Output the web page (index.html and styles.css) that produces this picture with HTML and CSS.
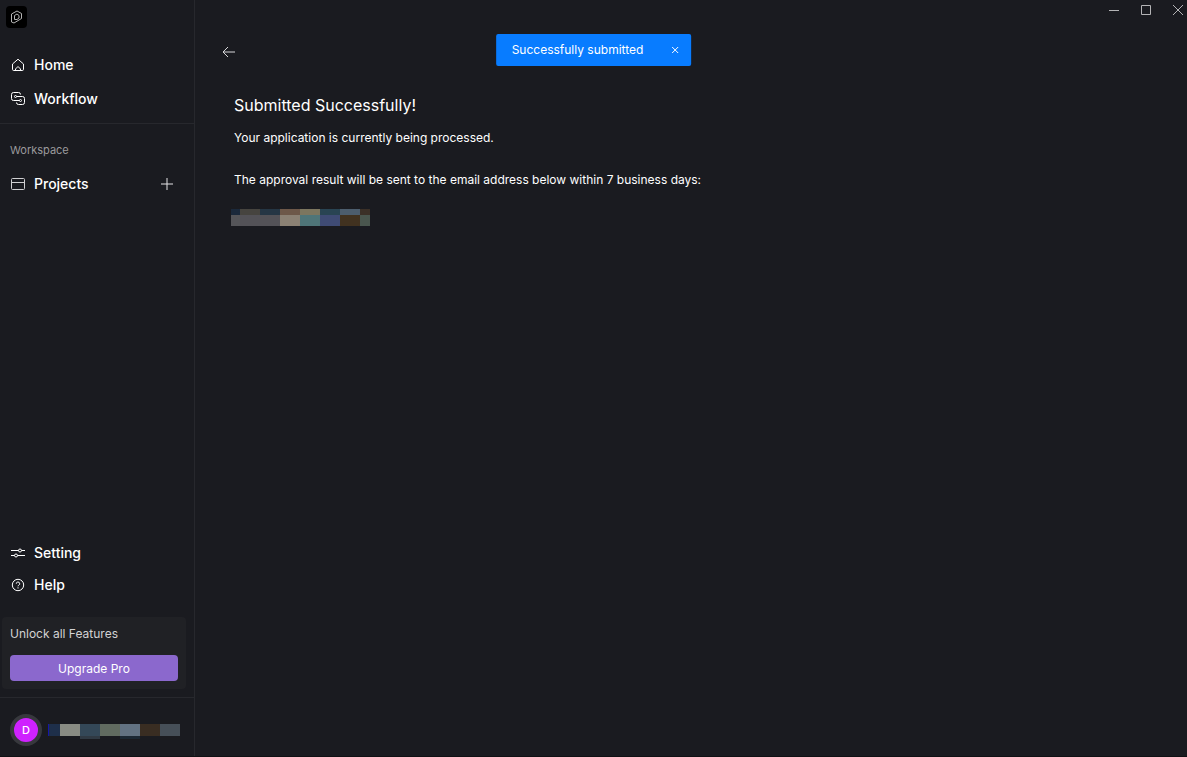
FILE: index.html
```html
<!DOCTYPE html>
<html lang="en">
<head>
  <meta charset="UTF-8">
  <meta name="viewport" content="width=device-width, initial-scale=1.0">
  <title>Submitted Successfully</title>
  <link rel="stylesheet" href="styles.css">
</head>
<body>
  <div class="app">
    <aside class="sidebar">
      <a class="logo" href="#" aria-label="Start page">
        <svg width="21" height="22" viewBox="0 0 21 22">
          <path d="M5.500 8 11 5l4.500 2.500v5L8 17l-2.500-1z"/>
          <path d="M8.500 13.500v-4L11 8l2 1.500v2.500l-2 1.500z"/>
        </svg>
      </a>

      <nav class="menu menu-main">
        <a class="menu-item" href="#">
          <svg class="icon" viewBox="0 0 16 16">
            <path d="M2.500 7 8 2.200 13.500 7v5.300a1.200 1.200 0 0 1-1.200 1.200H3.700a1.200 1.200 0 0 1-1.200-1.200z"/>
            <path d="M5.500 13.500v-1.500L8 9.500l2.500 2.500v1.500"/>
          </svg>
          <span>Home</span>
        </a>
        <a class="menu-item" href="#">
          <svg class="icon" viewBox="0 0 16 16">
            <path d="M6.500 5.500h6a2 2 0 0 1 2 2v4a2 2 0 0 1-2 2h-4a2 2 0 0 1-2-2"/>
            <path d="M9.500 9.500h-6a2 2 0 0 1-2-2v-4a2 2 0 0 1 2-2h5a2 2 0 0 1 2 2"/>
            <circle cx="5.500" cy="5.500" r="1"/>
            <circle cx="10.500" cy="9.500" r="1"/>
          </svg>
          <span>Workflow</span>
        </a>
      </nav>

      <div class="workspace">
        <h2 class="workspace-title">Workspace</h2>
        <div class="workspace-row">
          <a class="menu-item" href="#">
            <svg class="icon icon-soft" viewBox="0 0 16 16">
              <rect x="1.500" y="2.500" width="13" height="11" rx="1"/>
              <path d="M1.500 6.500h13"/>
            </svg>
            <span>Projects</span>
          </a>
          <button class="add-btn" type="button" aria-label="Add project">
            <svg width="14" height="14" viewBox="0 0 14 14"><path d="M7 1v12M1 7h12"/></svg>
          </button>
        </div>
      </div>

      <nav class="menu menu-bottom">
        <a class="menu-item" href="#">
          <svg class="icon" viewBox="0 0 16 16">
            <path d="M1 5.500h7.500M11.500 5.500H15M1 10.500h3.500M7.500 10.500H15"/>
            <circle cx="10" cy="5.500" r="1.500"/>
            <circle cx="6" cy="10.500" r="1.500"/>
          </svg>
          <span>Setting</span>
        </a>
        <a class="menu-item" href="#">
          <svg class="icon" viewBox="0 0 16 16">
            <circle cx="8" cy="8" r="5.700"/>
            <path d="M6.300 6.700a1.700 1.700 0 1 1 2.500 1.500c-.6.300-.8.600-.8 1.100M8 10.300v1.200"/>
          </svg>
          <span>Help</span>
        </a>
      </nav>

      <div class="upgrade">
        <p>Unlock all Features</p>
        <button class="upgrade-btn" type="button">Upgrade Pro</button>
      </div>

      <div class="user">
        <span class="avatar">D</span>
        <span class="mask mask-user">
          <i class="u1"></i><i class="u2"></i><i class="u3"></i><i class="u4"></i>
          <i class="u5"></i><i class="u6"></i><i class="u7"></i><i class="u8"></i>
        </span>
      </div>
    </aside>

    <main class="main">
      <button class="back-btn" type="button" aria-label="Back">
        <svg width="14" height="14" viewBox="0 0 14 14"><path d="M13 7H1.500M6 2 1 7l5 5"/></svg>
      </button>
      <section class="content">
        <h1>Submitted Successfully!</h1>
        <p>Your application is currently being processed.</p>
        <p class="result">The approval result will be sent to the email address below within 7 business days:</p>
      </section>
      <div class="mask mask-email">
        <i class="e1"></i><i class="e2"></i><i class="e3"></i><i class="e4"></i>
        <i class="e5"></i><i class="e6"></i><i class="e7"></i><i class="e8"></i>
      </div>
    </main>
  </div>

  <div class="window-controls">
    <button type="button" aria-label="Minimize"><svg width="12" height="12" viewBox="0 0 12 12"><path d="M1 6.500h10"/></svg></button>
    <button type="button" aria-label="Maximize"><svg width="12" height="12" viewBox="0 0 12 12"><path d="M1.500 1.500h9v9h-9z"/></svg></button>
    <button type="button" aria-label="Close"><svg width="12" height="12" viewBox="0 0 12 12"><path d="M1 1l10 10M11 1 1 11"/></svg></button>
  </div>

  <div class="toast" role="status">
    <span>Successfully submitted</span>
    <button type="button" aria-label="Dismiss"><svg width="8" height="8" viewBox="0 0 8 8"><path d="M1 1l6 6M7 1 1 7"/></svg></button>
  </div>
</body>
</html>
```
FILE: styles.css
```css
* {
  box-sizing: border-box;
}

body {
  margin: 0;
  font-family: Inter, "Liberation Sans", sans-serif;
  font-size: 12px;
  background: #1a1b20;
  color: #fff;
}

button {
  padding: 0;
  border: none;
  background: none;
  color: inherit;
  font: inherit;
  cursor: pointer;
}

a {
  color: inherit;
  text-decoration: none;
}

h1, h2, p {
  margin: 0;
  font-weight: 400;
}

svg {
  display: block;
  fill: none;
  stroke: currentColor;
}

.app {
  display: flex;
  min-height: 100vh;
  border-bottom: 1px solid #101114;
}

/* sidebar */
.sidebar {
  display: flex;
  flex-direction: column;
  flex: 0 0 195px;
  border-right: 1px solid #27282d;
}

.logo {
  align-self: flex-start;
  margin: 6px;
  border-radius: 4px;
  background: #000;
  color: #b4b4b4;
}

.menu {
  display: flex;
  flex-direction: column;
}

.menu-main {
  gap: 10px;
  padding: 19px 10px 12px;
  border-bottom: 1px solid #27282d;
}

.menu-item {
  display: flex;
  align-items: center;
  gap: 8px;
  font-size: 14px;
  font-weight: 500;
  line-height: 24px;
}

.icon {
  width: 16px;
  height: 16px;
}

.icon-soft {
  color: #d0d0d2;
}

.workspace {
  padding: 18px 10px;
}

.workspace-title {
  margin-bottom: 14px;
  color: #9a9a9c;
  font-size: 11px;
  line-height: 16px;
}

.workspace-row {
  display: flex;
  align-items: center;
  justify-content: space-between;
}

.add-btn {
  margin-right: 10px;
  color: #e4e4e6;
}

.menu-bottom {
  gap: 8px;
  margin-top: auto;
  padding: 0 10px 20px;
}

.upgrade {
  margin: 0 8px 8px 2px;
  padding: 8px;
  border-radius: 4px;
  background: #202125;
  color: #d2d2d3;
}

.upgrade p {
  line-height: 18px;
}

.upgrade-btn {
  width: 100%;
  height: 26px;
  margin-top: 12px;
  border-radius: 4px;
  background: #8b68cd;
  color: #fff;
}

.user {
  display: flex;
  align-items: center;
  gap: 6px;
  padding: 16px 10px 10px;
  border-top: 1px solid #27282d;
}

.avatar {
  width: 32px;
  height: 32px;
  border: 4px solid #37383d;
  border-radius: 50%;
  background: #cf22ff;
  font-size: 11px;
  font-weight: 500;
  line-height: 24px;
  text-align: center;
}

/* hidden personal data */
.mask {
  display: grid;
}

.mask-user {
  grid-template-columns: 1px 11px repeat(6, 20px);
  height: 12px;
}

.u1 { background: #1616a8; }
.u2 { background: #1e2f4a; }
.u3 { background: #898c84; }
.u4 { background: #344858; box-shadow: 0 3px #303a44; }
.u5 { background: #616b60; }
.u6 { background: #627282; box-shadow: 0 3px #1b2834; }
.u7 { background: #392d22; }
.u8 { background: #464f58; }

.mask-email {
  grid-template-columns: 9px repeat(6, 20px) 10px;
  height: 17px;
  margin: 20px 0 0 36px;
}

.e1 { background: linear-gradient(#1b293b 6px, #555559 6px); }
.e2 { background: linear-gradient(#46443f 6px, #535257 6px); }
.e3 { background: linear-gradient(#253644 6px, #535257 6px); }
.e4 { background: linear-gradient(#6d5849 6px, #8b8174 6px); }
.e5 { background: linear-gradient(#7c765f 6px, #4f7578 6px); }
.e6 { background: linear-gradient(#294453 6px, #3f4b74 6px); }
.e7 { background: linear-gradient(#4c5d6d 6px, #413220 6px); }
.e8 { background: linear-gradient(#3b3027 6px, #4a564e 6px); }

/* page */
.main {
  flex: 1;
  min-width: 0;
  padding-top: 45px;
}

.back-btn {
  display: block;
  margin-left: 27px;
  color: #d8d8da;
}

.content {
  padding: 34px 39px 0;
  line-height: 18px;
}

.content h1 {
  margin-bottom: 12px;
  font-size: 16px;
  line-height: 24px;
}

.result {
  margin-top: 24px;
}

.window-controls {
  position: absolute;
  top: 4px;
  right: 3px;
  display: flex;
  gap: 20px;
  color: #b4b4b6;
}

.toast {
  position: absolute;
  top: 34px;
  left: 50%;
  display: flex;
  align-items: center;
  gap: 28px;
  padding: 0 12px 0 16px;
  border-radius: 2px;
  background: #087cff;
  line-height: 32px;
  white-space: nowrap;
  transform: translateX(-50%);
}
```
